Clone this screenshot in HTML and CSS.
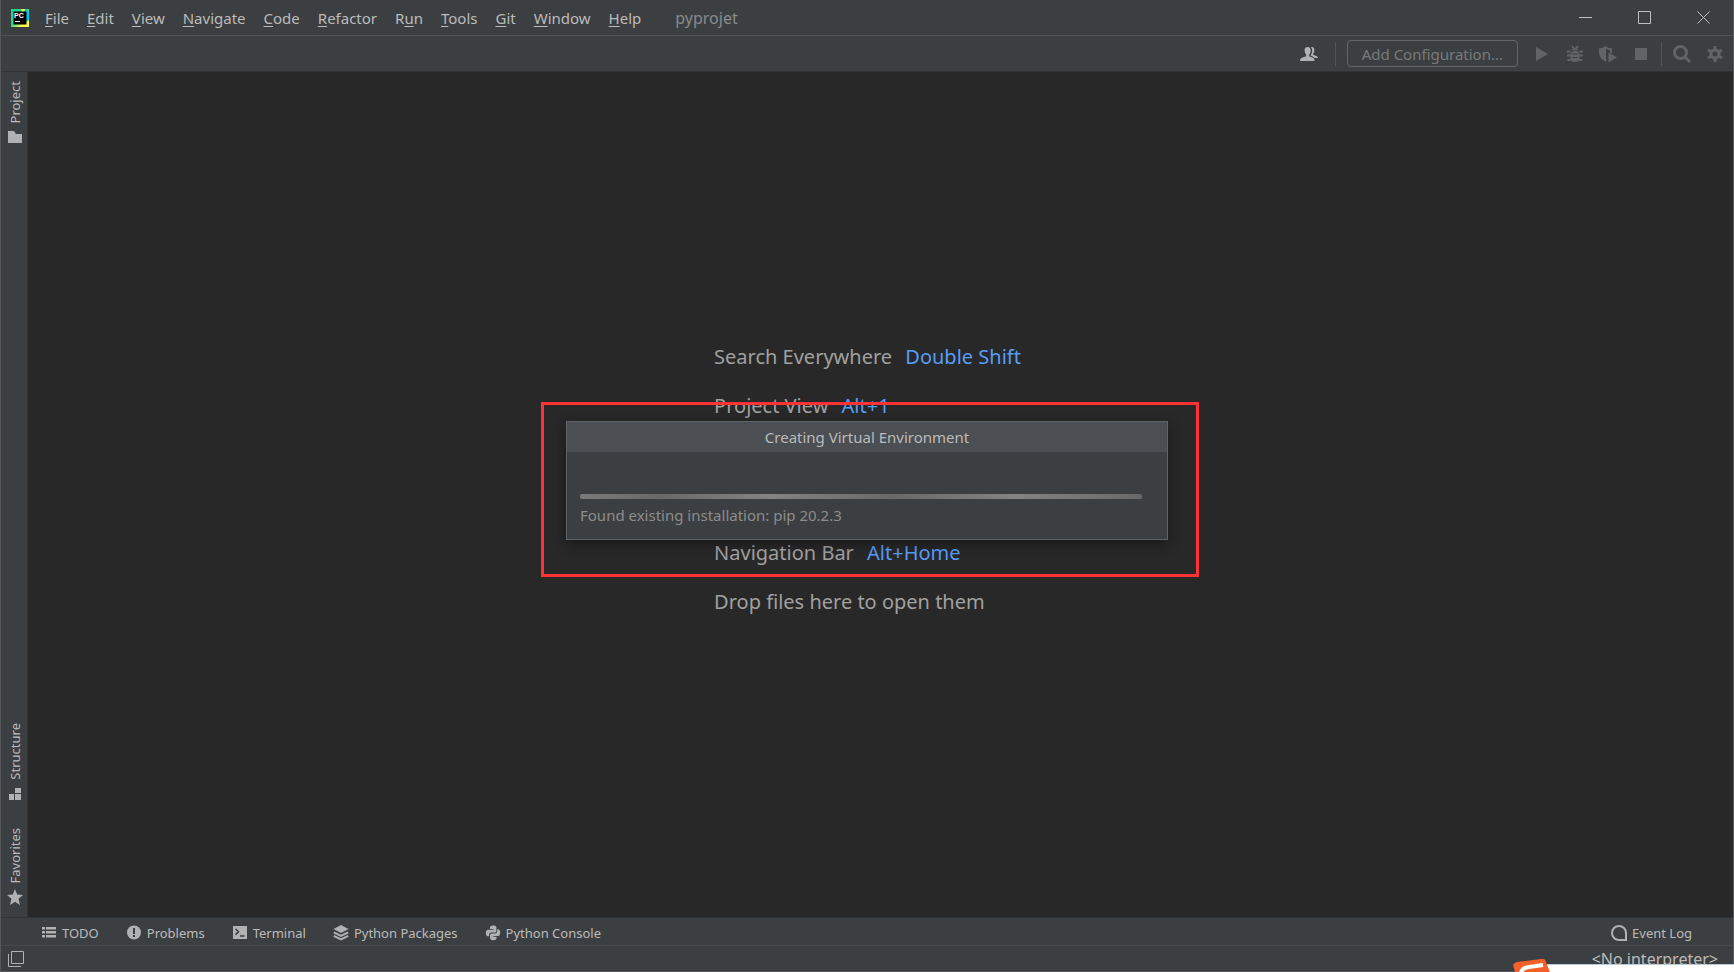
FILE: index.html
```html
<!DOCTYPE html>
<html lang="en">
<head>
    <meta charset="UTF-8">
    <meta name="viewport" content="width=device-width, initial-scale=1.0">
    <title>pyprojet</title>
    <link rel="stylesheet" href="styles.css">
</head>
<body>
    <div class="ide">
        <!-- Title bar with main menu -->
        <header class="title-bar">
            <svg class="app-logo" viewBox="0 0 18 18" aria-hidden="true">
                <defs>
                    <linearGradient id="logo-gradient" x1="0" y1="0" x2="1" y2="1">
                        <stop offset="0" stop-color="#21d789"/>
                        <stop offset="0.45" stop-color="#21d789"/>
                        <stop offset="0.75" stop-color="#fcf84a"/>
                    </linearGradient>
                </defs>
                <rect width="18" height="18" fill="url(#logo-gradient)"/>
                <path d="M13 0h2l3 3v8l-3 2z" fill="#07c3f2"/>
                <path d="M10 0h4l-1 3h-2z" fill="#fcf84a"/>
                <rect x="2.500" y="2.500" width="13" height="13" fill="#000"/>
                <text x="3" y="9" class="logo-text">PC</text>
                <rect x="4" y="12" width="5" height="1" fill="#fff"/>
            </svg>
            <nav class="main-menu">
                <button><u>F</u>ile</button>
                <button><u>E</u>dit</button>
                <button><u>V</u>iew</button>
                <button><u>N</u>avigate</button>
                <button><u>C</u>ode</button>
                <button><u>R</u>efactor</button>
                <button>R<u>u</u>n</button>
                <button><u>T</u>ools</button>
                <button><u>G</u>it</button>
                <button><u>W</u>indow</button>
                <button><u>H</u>elp</button>
            </nav>
            <span class="project-name">pyprojet</span>
            <div class="window-controls">
                <button aria-label="Minimize"><svg viewBox="0 0 13 13"><path d="M0 6.500h13"/></svg></button>
                <button aria-label="Maximize"><svg viewBox="0 0 13 13"><path d="M.5.5h12v12H.5z"/></svg></button>
                <button aria-label="Close"><svg viewBox="0 0 13 13"><path d="M.5.5l12 12M12.500.5l-12 12"/></svg></button>
            </div>
        </header>

        <!-- Run toolbar -->
        <div class="toolbar">
            <button class="tool-icon light" aria-label="Code With Me">
                <svg viewBox="0 0 18 18"><path d="M7.500 2C5.300 2 4.500 3.600 4.600 5.500c.1 2 .8 3.200 1.500 4v1.700C3 12.400 0 12.600 0 16h14.600c0-3.400-2.600-3.600-5.400-4.800V9.500c.8-.8 1.500-2 1.500-4C10.800 3.400 9.700 2 7.500 2z"/><path d="M11 2.100c2.500-.6 3.700 1.200 3.300 3.800-.2 1.400-.7 2.100-1.200 2.700v1.100c2 1 4.900 1 4.900 3.300h-3.600c-.9-1.300-2.400-1.900-3.600-2.300v-.8c1.900-2 1.900-5.600.2-7.800z"/></svg>
            </button>
            <span class="separator"></span>
            <button class="run-config" disabled>Add Configuration...</button>
            <button class="tool-icon" aria-label="Run" disabled>
                <svg viewBox="0 0 18 18"><path d="M3 2l12 7-12 7z"/></svg>
            </button>
            <button class="tool-icon" aria-label="Debug" disabled>
                <svg viewBox="0 0 18 18"><path d="M5.500 5.200a3.700 3.700 0 0 1 7 0z"/><rect x="4.500" y="6" width="9" height="11" rx="4"/><path class="stroke" d="M6 1l2 2.500M12 1l-2 2.500M1 6.500h3.500M13.500 6.500H17M1 10.500h16M1.500 15h4M12.500 15h4"/><path class="cut" d="M6.500 9h5M6.500 12.500h5"/></svg>
            </button>
            <button class="tool-icon" aria-label="Run with Coverage" disabled>
                <svg viewBox="0 0 18 18"><path d="M0 3.500Q4 3 6.500 1 9 3 13 3.500V8h-2V5.500L7 3.800v10.500l1 1.200-1.500 1Q0 13 0 8z"/><path d="M9.500 7.500l8.500 5-8.500 5z"/></svg>
            </button>
            <button class="tool-icon" aria-label="Stop" disabled>
                <svg viewBox="0 0 18 18"><path d="M3 3h12v12H3z"/></svg>
            </button>
            <span class="separator"></span>
            <button class="tool-icon" aria-label="Search Everywhere">
                <svg viewBox="0 0 18 18"><circle class="ring" cx="7.500" cy="7.500" r="6"/><path class="handle" d="M11.500 11.500l5.500 5.500"/></svg>
            </button>
            <button class="tool-icon" aria-label="Settings">
                <svg viewBox="0 0 18 18"><circle class="ring" cx="9" cy="9" r="4"/><path class="handle" d="M9 1v3.500M9 13.500V17M2 5l3 1.800M13 11.200l3 1.800M2 13l3-1.800M13 6.800L16 5"/></svg>
            </button>
        </div>

        <main class="workspace">
            <!-- Left tool window stripe -->
            <aside class="stripe">
                <button class="stripe-button">
                    <svg viewBox="0 0 16 16"><path d="M1 2h6l2 3h6v9H1z"/></svg>
                    <span>Project</span>
                </button>
                <div class="stripe-group">
                    <button class="stripe-button">
                        <svg viewBox="0 0 16 16"><path d="M8 2h6v5H8zM2 8h5v6H2zM8 8h6v6H8z"/></svg>
                        <span>Structure</span>
                    </button>
                    <button class="stripe-button">
                        <svg viewBox="0 0 16 16"><path d="M8 0l2.200 5.500 5.800.4-4.500 3.800L13 16l-5-3.300L3 16l1.500-6.300L0 5.900l5.800-.4z"/></svg>
                        <span>Favorites</span>
                    </button>
                </div>
            </aside>

            <section class="editor">
                <ul class="hints">
                    <li>Search Everywhere <kbd>Double Shift</kbd></li>
                    <li>Project View <kbd>Alt+1</kbd></li>
                    <li class="hint-nav">Navigation Bar <kbd>Alt+Home</kbd></li>
                    <li class="hint-drop">Drop files here to open them</li>
                </ul>
            </section>
        </main>

        <!-- Bottom tool window bar -->
        <footer class="tool-bar">
            <button class="tool-button">
                <svg viewBox="0 0 16 16"><path d="M1 2h3v2.500H1zM5 2h10v2.500H5zM1 6h3v2.500H1zM5 6h10v2.500H5zM1 10h3v2.500H1zM5 10h10v2.500H5z"/></svg>
                TODO
            </button>
            <button class="tool-button">
                <svg viewBox="0 0 16 16"><circle cx="8" cy="7.500" r="7"/><path class="mark" d="M7 3h2v6H7zM7 10h2v2H7z"/></svg>
                Problems
            </button>
            <button class="tool-button">
                <svg viewBox="0 0 16 16"><path d="M1 1h14v13H1z"/><path class="prompt" d="M3.500 4l3 2.800-3 2.800M8 11h4.500"/></svg>
                Terminal
            </button>
            <button class="tool-button">
                <svg viewBox="0 0 16 16"><path d="M8 0l7.500 4L8 8 .5 4z"/><path class="layer" d="M.8 7.300L8 11l7.200-3.700M.8 10.800L8 14.500l7.200-3.700"/></svg>
                Python Packages
            </button>
            <button class="tool-button">
                <svg viewBox="0 0 16 16"><path d="M8 .5C5.500.5 5 1.500 5 2.500V4h3.500v.7H3C1.500 4.700.800 6 .800 8s.9 3.200 2 3.200h1.400V9.500c0-1.300 1-2 2.200-2h3.300c1 0 1.700-.8 1.700-1.800V2.500C11.400 1 10.300.5 8 .5z"/><path d="M12.200 4.200v2c0 1.300-1 2.200-2.200 2.200H6.800c-1 0-1.700.8-1.700 1.800v2.800c0 1.400 1.300 2.300 3.200 2.300 2 0 3.200-.8 3.200-2.200v-1.400H8.200V11h5c1.300 0 2-1.400 2-3.300 0-2-.7-3.500-2-3.500z"/></svg>
                Python Console
            </button>
            <button class="tool-button event-log">
                <svg viewBox="0 0 16 16"><path class="balloon" d="M8 1a7 7 0 1 0 0 14h7V8a7 7 0 0 0-7-7z"/></svg>
                Event Log
            </button>
        </footer>

        <!-- Status bar -->
        <div class="status-bar">
            <button class="status-toggle" aria-label="Tool windows">
                <svg viewBox="0 0 16 16"><path d="M3.500.5h12v12h-12zM.5 3v12.500H13"/></svg>
            </button>
            <button class="interpreter">&lt;No interpreter&gt;</button>
        </div>
    </div>

    <!-- Progress dialog -->
    <div class="dialog" role="dialog" aria-labelledby="dialog-title">
        <h1 class="dialog-title" id="dialog-title">Creating Virtual Environment</h1>
        <div class="dialog-body">
            <div class="progress" role="progressbar" aria-label="Creating Virtual Environment"></div>
            <p class="progress-text">Found existing installation: pip 20.2.3</p>
        </div>
        <div class="highlight"></div>
    </div>

    <!-- Input method bar peeking in from the bottom edge -->
    <div class="ime">
        <svg viewBox="0 0 38 13" aria-hidden="true">
            <path d="M0 6Q1 4 4 3L28 0q4-1 5 3l5 13H3z" fill="#f4602a"/>
            <path d="M8 15q0-6 8-7l14-2" fill="none" stroke="#fff" stroke-width="4"/>
        </svg>
        <div class="ime-panel"></div>
    </div>
</body>
</html>
```
FILE: styles.css
```css
* {
    box-sizing: border-box;
}

body {
    margin: 0;
    height: 100vh;
    overflow: hidden;
    position: relative;
    background: #282828;
    color: #bbbbbb;
    font-family: 'Noto Sans', 'Open Sans', sans-serif;
    font-size: 15px;
}

button {
    margin: 0;
    padding: 0;
    border: none;
    background: none;
    color: inherit;
    font: inherit;
    white-space: nowrap;
}

.ide {
    height: 100%;
    display: flex;
    flex-direction: column;
    background: #3c3f41;
    border: 1px solid #55585a;
    border-top: none;
}

/* Title bar */
.title-bar {
    height: 36px;
    display: flex;
    align-items: center;
    border-bottom: 1px solid #515355;
    padding-left: 10px;
}

.app-logo {
    width: 18px;
    height: 18px;
    margin-right: 16px;
}

.logo-text {
    font-family: 'Liberation Sans', sans-serif;
    font-size: 7px;
    font-weight: bold;
    fill: #fff;
}

.main-menu {
    display: flex;
    gap: 18px;
}

.main-menu u {
    text-underline-offset: 2px;
}

.project-name {
    margin-left: 34px;
    font-size: 16px;
    color: #888a8b;
}

.window-controls {
    margin-left: auto;
    display: flex;
}

.window-controls button {
    width: 59px;
    height: 35px;
    display: flex;
    align-items: center;
    justify-content: center;
}

.window-controls svg {
    width: 13px;
    height: 13px;
    fill: none;
    stroke: #c0c0c0;
}

/* Toolbar */
.toolbar {
    height: 36px;
    display: flex;
    align-items: center;
    justify-content: flex-end;
    gap: 15px;
    padding-right: 9px;
    border-bottom: 1px solid #323232;
}

.tool-icon {
    width: 18px;
    height: 18px;
    color: #616365;
}

.tool-icon.light {
    margin-right: 6px;
    color: #afb1b3;
}

.tool-icon svg {
    display: block;
    width: 18px;
    height: 18px;
    fill: currentColor;
}

.tool-icon .stroke {
    fill: none;
    stroke: currentColor;
    stroke-width: 2;
}

.tool-icon .cut {
    stroke: #3c3f41;
    stroke-width: 1;
}

.tool-icon .ring,
.tool-icon .handle {
    fill: none;
    stroke: currentColor;
    stroke-width: 3;
}

.separator {
    width: 1px;
    height: 24px;
    margin: 0 -4px;
    background: #515355;
}

.run-config {
    height: 27px;
    padding: 0 14px;
    border: 1px solid #646668;
    border-radius: 4px;
    color: #777a7c;
}

/* Workspace */
.workspace {
    flex: 1;
    min-height: 0;
    display: flex;
    border-bottom: 1px solid #323232;
}

.stripe {
    width: 27px;
    display: flex;
    flex-direction: column;
    justify-content: space-between;
    padding: 9px 0 12px;
    border-right: 1px solid #323232;
}

.stripe-group {
    display: flex;
    flex-direction: column;
    gap: 26px;
}

.stripe-button {
    width: 28px;
    display: flex;
    flex-direction: column-reverse;
    align-items: center;
    gap: 6px;
    font-size: 13px;
    line-height: 18px;
}

.stripe-button span {
    writing-mode: vertical-rl;
    transform: rotate(180deg);
}

.stripe-button svg {
    width: 16px;
    height: 16px;
    fill: #afb1b3;
}

.editor {
    flex: 1;
    display: flex;
    align-items: center;
    justify-content: center;
    padding: 0 26px 32px 0;
    background: #282828;
}

.hints {
    list-style: none;
    margin: 0;
    padding: 0;
    display: grid;
    grid-template-rows: repeat(6, 49px);
    align-items: center;
    font-size: 20px;
    color: #a0a0a0;
}

.hints kbd {
    margin-left: 8px;
    font-family: inherit;
    color: #589df6;
}

/* The dialog covers the rows in between */
.hint-nav {
    grid-row: 5;
}

.hint-drop {
    grid-row: 6;
}

/* Bottom bars */
.tool-bar {
    height: 28px;
    display: flex;
    align-items: center;
    gap: 27px;
    padding: 3px 41px 0 40px;
    border-bottom: 1px solid #484b4d;
    font-size: 13px;
}

.tool-button {
    display: flex;
    align-items: center;
    gap: 5px;
}

.tool-button svg {
    width: 16px;
    height: 16px;
    fill: #afb1b3;
}

.tool-button .mark {
    fill: #3c3f41;
}

.tool-button .prompt {
    fill: none;
    stroke: #3c3f41;
    stroke-width: 1.5;
}

.tool-button .layer,
.tool-button .balloon {
    fill: none;
    stroke: #afb1b3;
    stroke-width: 2;
}

.event-log {
    margin-left: auto;
}

.status-bar {
    height: 25px;
    display: flex;
    align-items: center;
    justify-content: space-between;
    padding: 0 15px 0 7px;
}

.status-toggle svg {
    display: block;
    width: 16px;
    height: 16px;
    fill: none;
    stroke: #afb1b3;
}

.interpreter {
    font-size: 16px;
}

/* Dialog */
.dialog {
    position: absolute;
    top: 421px;
    left: 50%;
    width: 602px;
    margin-left: -301px;
    background: #3c3f41;
    border: 1px solid #616365;
    box-shadow: 0 4px 12px rgba(0, 0, 0, 0.4);
}

.dialog-title {
    margin: 0;
    background: #4b4e52;
    font-size: 15px;
    font-weight: normal;
    line-height: 30px;
    text-align: center;
}

.dialog-body {
    padding: 42px 25px 11px 13px;
}

.progress {
    height: 5px;
    border-radius: 2px;
    background: linear-gradient(90deg, #7a7a7a, #696969 80px, #838383 190px, #696969 313px, #838383 435px, #696969);
}

.progress-text {
    margin: 3px 0 0;
    line-height: 26px;
    color: #8c8c8c;
}

.highlight {
    position: absolute;
    inset: -20px -32px -38px -26px;
    border: 3px solid #ff3333;
}

/* Input method bar */
.ime {
    position: absolute;
    right: 0;
    bottom: 0;
    width: 221px;
    height: 13px;
}

.ime svg {
    position: absolute;
    left: 0;
    bottom: 0;
    width: 38px;
    height: 13px;
}

.ime-panel {
    height: 8px;
    margin: 5px 0 0 34px;
    background: #fff;
    border-top: 1px solid #b9cbdc;
}
```
